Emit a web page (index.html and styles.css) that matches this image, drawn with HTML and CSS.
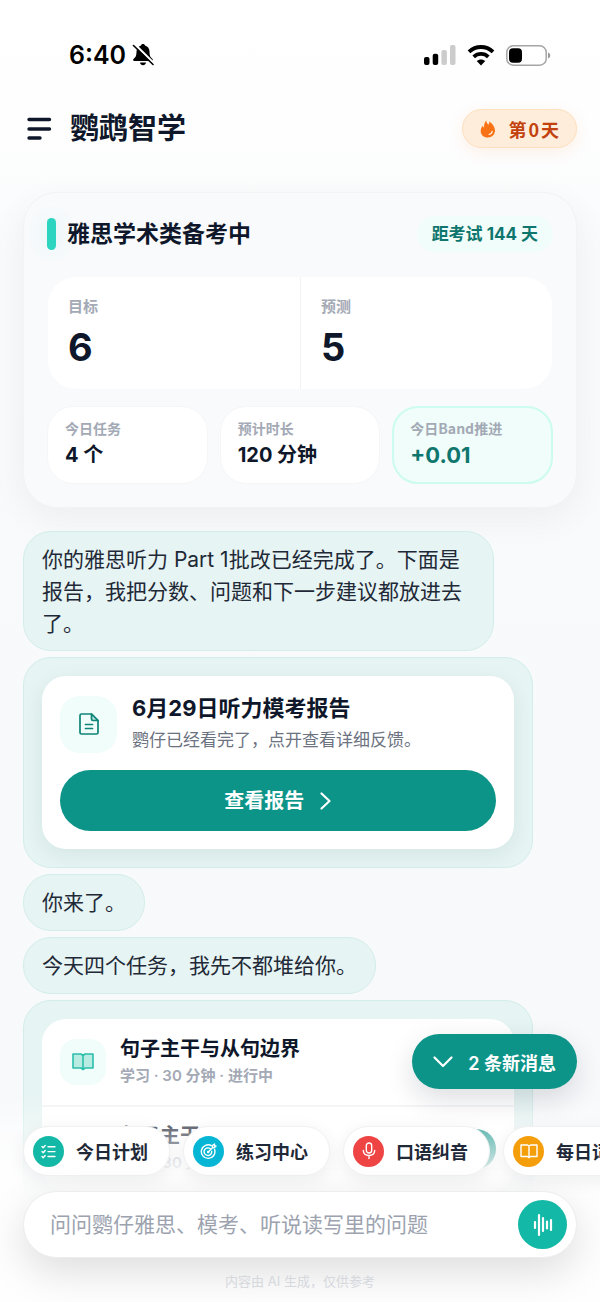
FILE: index.html
```html
<!DOCTYPE html>
<html lang="zh-CN">
  <head>
    <meta charset="utf-8">
    <meta name="viewport" content="width=device-width, initial-scale=1">
    <title>鹦鹉智学</title>
    <link rel="stylesheet" href="styles.css">
  </head>

  <body>
    <div class="app">
      <div class="status">
        <div class="status-side">
          <span class="clock">6:40</span>
          <svg width="22" height="24" viewBox="0 0 22 24">
            <path d="M11 1c1 0 1.800.600 2 1.400 3 .9 4.500 3.200 4.500 6.400 0 4 .8 5.500 2.800 7 1 .9.700 2.200-.8 2.200H2.500c-1.500 0-1.800-1.300-.8-2.200C3.700 14.300 4.500 12.800 4.500 8.800c0-3.200 1.500-5.500 4.500-6.400C9.200 1.600 10 1 11 1z"/>
            <path d="M8 19.500h6c-.3 1.800-1.500 2.800-3 2.800s-2.700-1-3-2.800z"/>
            <path d="M2.500 1l19 19" stroke="#fff" stroke-width="2.400"/>
            <path d="M1.500 2.500l19.500 19" stroke="#000" stroke-width="1.600" stroke-linecap="round"/>
          </svg>
        </div>
        <div class="status-side">
          <svg width="32" height="21" viewBox="0 0 32 21">
            <rect x="0" y="12" width="5.500" height="8" rx="2"/>
            <rect x="8.700" y="8.700" width="5.500" height="11.300" rx="2"/>
            <rect x="17.400" y="5" width="5.500" height="15" rx="2" fill="#ccc"/>
            <rect x="26" y="0" width="5.500" height="20" rx="2" fill="#ccc"/>
          </svg>
          <svg class="wifi" width="28" height="21" viewBox="0 0 28 21">
            <path d="M2 6.800c6.800-6.400 17.200-6.400 24 0" fill="none" stroke="#000" stroke-width="3.800"/>
            <path d="M6.700 11.800c4.200-3.900 10.400-3.900 14.600 0" fill="none" stroke="#000" stroke-width="3.800"/>
            <path d="M14 20.500l-4.300-4.400c2.400-2.200 6.200-2.200 8.600 0z"/>
          </svg>
          <svg width="45" height="21" viewBox="0 0 45 21">
            <rect x=".8" y=".8" width="39.400" height="19.400" rx="6.500" fill="none" stroke="#a5a5a5" stroke-width="1.500"/>
            <rect x="3" y="3.300" width="13" height="14.400" rx="4"/>
            <path d="M42 7.500c3 .8 3 5.200 0 6z" fill="#9a9a9a"/>
          </svg>
        </div>
      </div>

      <header class="topbar">
        <button class="menu-btn" type="button" aria-label="菜单">
          <svg width="26" height="24" viewBox="0 0 26 24" stroke="#0f172a" stroke-width="3.400" stroke-linecap="round">
            <path d="M3 2.500h20.500M3 12h20.500M3 21h11"/>
          </svg>
        </button>
        <h1 class="brand">鹦鹉智学</h1>
        <span class="streak">
          <svg width="16" height="18" viewBox="0 0 16 18">
            <path d="M6.200.500c.300 2.200 1.200 3.100 2.200 4.300.6-.7.900-1.700.900-3.200 3.200 2.200 5.700 5.400 5.700 9 0 4.100-3 6.900-7.200 6.900S.700 14.800.700 11c0-2.400 1-4 2.100-5.300.3 1.100.7 1.700 1.300 2.100C3.800 5 4.600 2.400 6.200.500z" fill="#f97316"/>
            <path d="M12.200 11.300c-.2 1.700-1.300 2.800-3 3.100" fill="none" stroke="#fff3e6" stroke-width="1.200" stroke-linecap="round"/>
          </svg>
          <span>第<span class="streak-days">0</span>天</span>
        </span>
      </header>

      <main class="content">
        <section class="summary">
          <div class="summary-head">
            <h2 class="summary-title">雅思学术类备考中</h2>
            <span class="countdown">距考试 144 天</span>
          </div>
          <dl class="scores">
            <div class="score">
              <dt>目标</dt>
              <dd>6</dd>
            </div>
            <div class="score">
              <dt>预测</dt>
              <dd>5</dd>
            </div>
          </dl>
          <dl class="stats">
            <div class="stat">
              <dt>今日任务</dt>
              <dd>4 个</dd>
            </div>
            <div class="stat">
              <dt>预计时长</dt>
              <dd>120 分钟</dd>
            </div>
            <div class="stat stat-band">
              <dt>今日Band推进</dt>
              <dd>+0.01</dd>
            </div>
          </dl>
        </section>

        <section class="chat">
          <p class="bubble">你的雅思听力 Part 1批改已经完成了。下面是报告，我把分数、问题和下一步建议都放进去了。</p>

          <div class="bubble bubble-card">
            <article class="report">
              <div class="report-head">
                <span class="report-icon">
                  <svg width="20" height="22" viewBox="0 0 20 22" fill="none" stroke="#0f8478" stroke-width="1.700" stroke-linejoin="round" stroke-linecap="round">
                    <path d="M12.500 1H2.500C1.700 1 1 1.700 1 2.500v17c0 .8.700 1.500 1.500 1.500h15c.800 0 1.500-.700 1.500-1.500V7.500z"/>
                    <path d="M12.500 1v5c0 .8.700 1.500 1.500 1.500h5z" fill="#b5e5dd"/>
                    <path d="M6.500 11.500h7M6.500 15.500h7"/>
                  </svg>
                </span>
                <div>
                  <h3 class="report-title">6月29日听力模考报告</h3>
                  <p class="report-text">鹦仔已经看完了，点开查看详细反馈。</p>
                </div>
              </div>
              <button class="report-btn" type="button">
                查看报告
                <svg width="11" height="18" viewBox="0 0 11 18" fill="none" stroke="#fff" stroke-width="2.200" stroke-linecap="round" stroke-linejoin="round">
                  <path d="M1.500 1.500L9.500 9l-8 7.500"/>
                </svg>
              </button>
            </article>
          </div>

          <p class="bubble">你来了。</p>
          <p class="bubble">今天四个任务，我先不都堆给你。</p>

          <div class="bubble bubble-card">
            <ul class="tasks">
              <li class="task">
                <span class="task-icon">
                  <svg width="22" height="18" viewBox="0 0 22 18" fill="#b8ebe2" stroke="#2bbfac" stroke-width="1.600" stroke-linejoin="round">
                    <path d="M1 1h8l2 1.500L13 1h8v14h-8l-2 1.500L9 15H1z"/>
                    <path d="M11 2.500V17"/>
                  </svg>
                </span>
                <div>
                  <h3 class="task-title">句子主干与从句边界</h3>
                  <p class="task-meta">学习 · 30 分钟 · 进行中</p>
                </div>
              </li>
              <li class="task">
                <span class="task-icon"></span>
                <div>
                  <h3 class="task-title">句子主干</h3>
                  <p class="task-meta">学习 · 30 分钟</p>
                </div>
                <button class="task-go" type="button" aria-label="开始"></button>
              </li>
            </ul>
          </div>
        </section>
      </main>

      <footer class="dock">
        <button class="new-messages" type="button">
          <svg width="20" height="12" viewBox="0 0 20 12" fill="none" stroke="#fff" stroke-width="2.200" stroke-linecap="round" stroke-linejoin="round">
            <path d="M1.500 1.500L10 10l8.500-8.500"/>
          </svg>
          2 条新消息
        </button>

        <nav class="chips">
          <button class="chip" type="button">
            <span class="chip-icon plan">
              <svg width="15" height="15" viewBox="0 0 15 15" fill="none" stroke="#fff" stroke-width="1.400" stroke-linecap="round" stroke-linejoin="round">
                <path d="M1 2.500l1.200 1.200L4.200 1.500M1 7.500l1.200 1.200 2-2.200M1 12.500l1.200 1.200 2-2.200M7 2.800h7M7 7.600h7M7 12.500h7"/>
              </svg>
            </span>
            今日计划
          </button>
          <button class="chip" type="button">
            <span class="chip-icon practice">
              <svg width="17" height="17" viewBox="0 0 17 17" fill="none" stroke="#fff" stroke-width="1.400" stroke-linecap="round" stroke-linejoin="round">
                <path d="M11.500 2.700A6.800 6.800 0 1 0 14.600 6.500M10.300 5.700A3.800 3.800 0 1 0 11.700 8.300"/>
                <path d="M8.200 9l4.300-4.300V2.500L14.500 1v2L16 3l-1.700 1.800h-1.800"/>
                <circle cx="8.200" cy="9" r=".6"/>
              </svg>
            </span>
            练习中心
          </button>
          <button class="chip" type="button">
            <span class="chip-icon speaking">
              <svg width="14" height="18" viewBox="0 0 14 18" fill="none" stroke="#fff" stroke-width="1.400" stroke-linecap="round">
                <rect x="4.300" y="1" width="5.400" height="10" rx="2.700"/>
                <path d="M1.300 8.500c.2 3.200 2.600 5 5.700 5s5.500-1.800 5.700-5M7 13.500v3"/>
              </svg>
            </span>
            口语纠音
          </button>
          <button class="chip" type="button">
            <span class="chip-icon words">
              <svg width="18" height="15" viewBox="0 0 18 15" fill="none" stroke="#fff" stroke-width="1.400" stroke-linejoin="round" stroke-linecap="round">
                <path d="M1 1h6.500L9 2l1.500-1H17v11.500h-6.500L9 13.700l-1.500-1.200H1zM9 2v11.700"/>
              </svg>
            </span>
            每日词汇
          </button>
        </nav>

        <form class="composer">
          <input class="composer-input" type="text" aria-label="输入问题" placeholder="问问鹦仔雅思、模考、听说读写里的问题">
          <button class="voice-btn" type="button" aria-label="语音输入">
            <svg width="20" height="24" viewBox="0 0 20 24" stroke="#fff" stroke-width="2.200" stroke-linecap="round">
              <path d="M2 9v6M6 2v20M10 5v13M14 8.500v7M18 7v10"/>
            </svg>
          </button>
        </form>
        <p class="notice">内容由 AI 生成，仅供参考</p>
      </footer>
    </div>
  </body>
</html>
```
FILE: styles.css
```css
* {
  box-sizing: border-box;
}

body {
  margin: 0;
  font-family: Inter, "Noto Sans CJK SC", sans-serif;
  color: #0f172a;
}

h1, h2, h3, p, dl, dd, ul {
  margin: 0;
  padding: 0;
}

button, input {
  font: inherit;
  color: inherit;
  border: 0;
  padding: 0;
}

button {
  cursor: pointer;
}

svg {
  display: block;
  flex: none;
}

.app {
  position: relative;
  height: 100vh;
  overflow: hidden;
  background: linear-gradient(#fff 0, #fefefe 130px, #f8fafb 260px, #f8f9fb 85%, #fff);
}

/* status bar */

.status {
  display: flex;
  justify-content: space-between;
  height: 72px;
  padding: 38px 49px 0 69px;
}

.status-side {
  display: flex;
  align-items: center;
  gap: 6px;
  height: 34px;
}

.clock {
  font-size: 25px;
  font-weight: 600;
  color: #000;
}

.wifi {
  margin: 0 5px;
}

/* top bar */

.topbar {
  display: flex;
  align-items: center;
  padding: 37px 23px 0 26px;
}

.menu-btn {
  background: none;
}

.brand {
  margin-left: 18px;
  flex: 1;
  font-size: 29px;
  line-height: 39px;
  font-weight: 700;
}

.streak {
  display: flex;
  align-items: center;
  gap: 12px;
  height: 39px;
  padding: 0 17px;
  border: 1px solid #fee0c0;
  border-radius: 20px;
  background: #ffeddb;
  box-shadow: 0 4px 16px rgba(249, 115, 22, 0.1);
  color: #c2410c;
  font-family: "Noto Sans CJK SC", sans-serif;
  font-size: 18px;
  line-height: 36px;
  font-weight: 700;
}

.streak-days {
  margin: 0 2px;
}

.content {
  padding: 44px 23px 0;
}

/* summary */

.summary {
  padding: 23px;
  border: 1px solid #f1f3f5;
  border-radius: 34px;
  background: #f9fafc;
  box-shadow: 0 10px 36px rgba(15, 23, 42, 0.05);
}

.summary-head {
  display: flex;
  align-items: center;
  justify-content: space-between;
  height: 36px;
}

.summary-title {
  display: flex;
  align-items: center;
  gap: 11px;
  font-size: 23px;
  line-height: 32px;
  font-weight: 600;
}

.summary-title::before {
  content: "";
  width: 9px;
  height: 32px;
  border-radius: 5px;
  background: #2dd4bf;
  box-shadow: 0 0 24px rgba(45, 212, 191, 0.2);
}

.countdown {
  padding: 0 15px;
  border-radius: 18px;
  background: #f0fdfa;
  color: #0f766e;
  font-size: 17px;
  line-height: 36px;
  font-weight: 700;
}

.scores {
  display: grid;
  grid-template-columns: 1fr 1fr;
  margin: 25px 1px 0;
  border-radius: 28px;
  background: #fff;
}

.score {
  height: 112px;
  padding: 18px 20px;
}

.score + .score {
  border-left: 1px solid #f1f2f4;
}

.score dt {
  font-size: 15px;
  line-height: 24px;
  font-weight: 600;
  color: #a3a9b5;
}

.score dd {
  margin-top: 8px;
  font-size: 38px;
  line-height: 40px;
  font-weight: 700;
}

.stats {
  display: grid;
  grid-template-columns: repeat(3, 1fr);
  gap: 12px;
  margin-top: 17px;
}

.stat {
  height: 78px;
  padding: 10px 17px;
  border: 1px solid #f5f6f8;
  border-radius: 26px;
  background: #fff;
}

.stat dt {
  font-family: "Noto Sans CJK SC", sans-serif;
  font-size: 14px;
  line-height: 22px;
  font-weight: 600;
  color: #a3a9b5;
}

.stat dd {
  margin-top: 1px;
  font-size: 20px;
  line-height: 30px;
  font-weight: 700;
}

.stat-band {
  padding: 9px 16px;
  border: 2px solid #ccfbef;
  background: #f0fdfa;
}

.stat-band dd {
  color: #0f766e;
  font-size: 22px;
}

/* chat */

.chat {
  display: flex;
  flex-direction: column;
  align-items: flex-start;
  gap: 6px;
  margin-top: 23px;
}

.bubble {
  max-width: 85%;
  min-height: 57px;
  padding: 12px 18px 10px;
  border: 1px solid #d3eeea;
  border-radius: 28px;
  background: #e6f4f3;
  color: #1f2937;
  font-size: 21px;
  line-height: 32px;
}

.bubble-card {
  width: 92%;
  max-width: none;
  padding: 18px;
}

.report {
  padding: 18px;
  border-radius: 24px;
  background: #fff;
  box-shadow: 0 6px 20px rgba(13, 80, 72, 0.08);
}

.report-head {
  display: flex;
  align-items: center;
  gap: 15px;
}

.report-icon,
.task-icon {
  flex: none;
  display: flex;
  align-items: center;
  justify-content: center;
  width: 57px;
  height: 57px;
  border-radius: 20px;
  background: #f0fdfa;
}

.report-title {
  color: #0f172a;
  font-size: 22px;
  line-height: 28px;
  font-weight: 700;
}

.report-text {
  margin-top: 4px;
  color: #6b7280;
  font-size: 17px;
  line-height: 28px;
}

.report-btn {
  display: flex;
  align-items: center;
  justify-content: center;
  gap: 16px;
  width: 100%;
  height: 61px;
  margin-top: 16px;
  border-radius: 31px;
  background: #0d9488;
  color: #fff;
  font-size: 20px;
  font-weight: 700;
}

.tasks {
  list-style: none;
  border-radius: 24px;
  background: #fff;
}

.task {
  display: flex;
  align-items: center;
  gap: 14px;
  height: 86px;
  padding: 0 18px;
}

.task + .task {
  border-top: 2px solid #f3f4f6;
}

.task-icon {
  width: 46px;
  height: 46px;
  border-radius: 16px;
}

.task-title {
  color: #0f172a;
  font-size: 20px;
  line-height: 28px;
  font-weight: 600;
}

.task-meta {
  color: #a3a9b5;
  font-size: 15px;
  line-height: 26px;
  font-weight: 600;
}

.task-go {
  width: 64px;
  height: 40px;
  margin-left: auto;
  border-radius: 20px;
  background: #0d9488;
}

/* dock */

.dock {
  position: absolute;
  left: 0;
  right: 0;
  bottom: 0;
  display: flex;
  flex-direction: column;
  padding: 0 23px 10px;
  background: linear-gradient(rgba(255, 255, 255, 0) 60px, rgba(255, 255, 255, 0.5) 105px, rgba(254, 254, 254, 0.85) 135px, rgba(254, 254, 254, 0.95) 180px);
}

.new-messages {
  display: flex;
  align-items: center;
  align-self: flex-end;
  gap: 15px;
  height: 55px;
  padding: 0 21px;
  border-radius: 28px;
  background: #0d9488;
  box-shadow: 0 10px 28px rgba(15, 23, 42, 0.14);
  color: #fff;
  font-size: 18px;
  font-weight: 600;
}

.chips {
  display: flex;
  gap: 13px;
  margin: 37px -23px 0 0;
}

.chip {
  flex: none;
  display: flex;
  align-items: center;
  gap: 12px;
  height: 50px;
  padding: 0 21px 0 9px;
  border: 1px solid #f1f1f2;
  border-radius: 25px;
  background: #fff;
  box-shadow: 0 4px 18px rgba(15, 23, 42, 0.07);
  color: #1f2937;
  font-size: 18px;
  font-weight: 600;
}

.chip-icon {
  display: flex;
  align-items: center;
  justify-content: center;
  width: 31px;
  height: 31px;
  border-radius: 50%;
}

.plan {
  background: #14b8a6;
}

.practice {
  background: #06b6d4;
}

.speaking {
  background: #ef4444;
}

.words {
  background: #f59e0b;
}

.composer {
  display: flex;
  align-items: center;
  height: 67px;
  margin-top: 15px;
  padding: 0 9px 0 26px;
  border: 1px solid #ededee;
  border-radius: 34px;
  background: #fff;
  box-shadow: 0 14px 40px rgba(0, 0, 0, 0.13);
}

.composer-input {
  flex: 1;
  min-width: 0;
  height: 48px;
  background: none;
  font-size: 21px;
  outline: none;
}

.composer-input::placeholder {
  color: #9ca3af;
}

.voice-btn {
  display: flex;
  align-items: center;
  justify-content: center;
  width: 49px;
  height: 49px;
  border-radius: 50%;
  background: #14b8a6;
}

.notice {
  margin-top: 12px;
  color: #d5d8dd;
  font-size: 13px;
  line-height: 22px;
  text-align: center;
}
```
